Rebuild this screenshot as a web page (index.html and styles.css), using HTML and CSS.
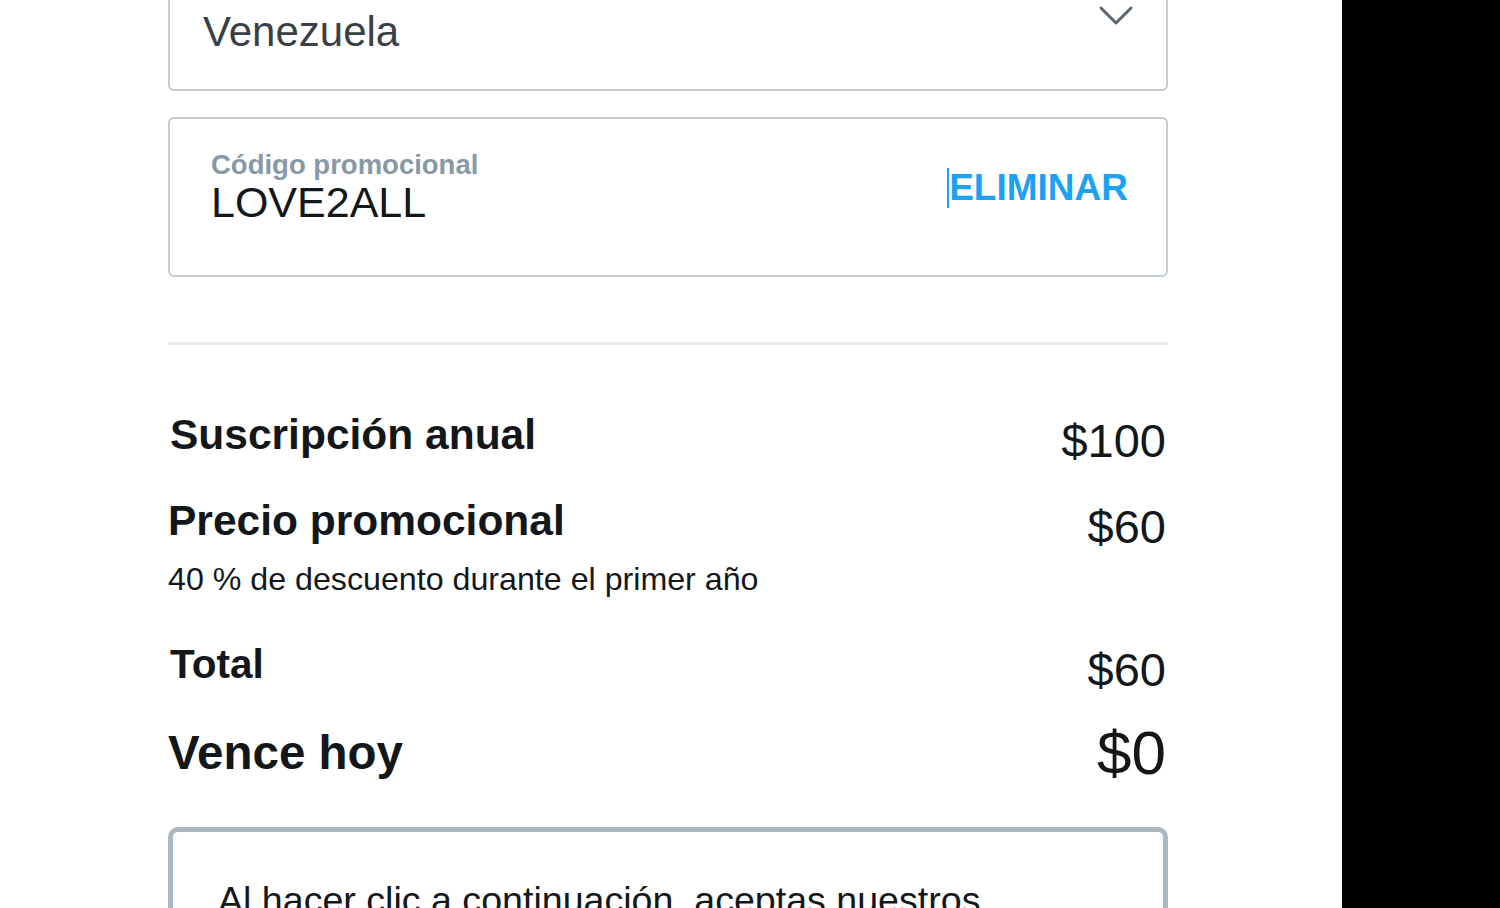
FILE: index.html
```html
<!DOCTYPE html>
<html lang="es">
<head>
    <meta charset="UTF-8">
    <meta name="viewport" content="width=device-width, initial-scale=1.0">
    <title>Suscripción</title>
    <link rel="stylesheet" href="styles.css">
</head>
<body>

<div class="page">
    <div class="checkout">

        <div class="select-box">
            <span class="select-value">Venezuela</span>
            <svg class="chevron" width="36" height="22" viewBox="0 0 36 22">
                <polyline points="3,3 18,18 33,3" fill="none" stroke="#5b6670" stroke-width="3" stroke-linecap="round" stroke-linejoin="round"/>
            </svg>
        </div>

        <div class="promo-box">
            <div class="promo-field">
                <span class="promo-label">Código promocional</span>
                <span class="promo-value">LOVE2ALL</span>
            </div>
            <span class="promo-remove">ELIMINAR</span>
        </div>

        <hr class="divider">

        <div class="row row-first">
            <span class="row-label">Suscripción anual</span>
            <span class="row-price">$100</span>
        </div>
        <div class="row">
            <div>
                <div class="row-label">Precio promocional</div>
                <div class="row-note">40 % de descuento durante el primer año</div>
            </div>
            <span class="row-price">$60</span>
        </div>
        <div class="row row-total">
            <span class="row-label label-small">Total</span>
            <span class="row-price">$60</span>
        </div>
        <div class="row row-due">
            <span class="due-label">Vence hoy</span>
            <span class="due-price">$0</span>
        </div>

        <div class="terms">
            Al hacer clic a continuación, aceptas nuestros Términos de servicio y la Política de privacidad.
        </div>

    </div>
    <div class="side"></div>
</div>

</body>
</html>
```

FILE: styles.css
```css
html, body {
    height: 100%;
    overflow: hidden;
}
body {
    font-family: "Liberation Sans", Arial, sans-serif;
    background-color: white;
    color: #14171a;
    margin: 0;
}
.page {
    display: flex;
    height: 100%;
}
.checkout {
    width: 1000px;
    padding-left: 168px;
    padding-right: 174px;
    margin-top: -30px;
}
.side {
    flex: 1;
    background-color: #000;
}

.select-box {
    display: flex;
    justify-content: space-between;
    align-items: flex-start;
    height: 121px;
    box-sizing: border-box;
    padding: 36px 32px 0 33px;
    border: 2px solid #c3ccd3;
    border-radius: 6px;
}
.select-value {
    font-size: 42px;
    line-height: 48px;
    color: #3a3f45;
}
.chevron {
    margin-top: -3px;
}

.promo-box {
    display: flex;
    justify-content: space-between;
    align-items: flex-start;
    margin-top: 26px;
    height: 160px;
    box-sizing: border-box;
    padding: 31px 38px 0 41px;
    border: 2px solid #c3ccd3;
    border-radius: 6px;
}
.promo-field {
    display: flex;
    flex-direction: column;
}
.promo-label {
    font-size: 27.5px;
    font-weight: bold;
    line-height: 30px;
    color: #8899a6;
}
.promo-value {
    font-size: 43px;
    line-height: 44px;
    color: #14171a;
}
.promo-remove {
    margin-top: 18px;
    font-size: 37px;
    font-weight: bold;
    line-height: 40px;
    color: #1da1f2;
    border-left: 2px solid #1da1f2;
}

.divider {
    border: none;
    height: 3px;
    background-color: #e6ecf0;
    margin: 65px 0 0 0;
}

.row {
    display: flex;
    justify-content: space-between;
    align-items: flex-start;
    margin-top: 26px;
    padding-right: 2px;
}
.row-first {
    margin-top: 66px;
    padding-left: 2px;
}
.row-total {
    margin-top: 41px;
    padding-left: 2px;
}
.row-due {
    margin-top: 25px;
}
.row-label {
    font-size: 42.5px;
    font-weight: bold;
    line-height: 48px;
}
.label-small {
    font-size: 40.5px;
}
.row-price {
    font-size: 47px;
    line-height: 60px;
}
.row-note {
    font-size: 32.2px;
    line-height: 40px;
    margin-top: 14px;
}
.due-label {
    font-size: 47.5px;
    font-weight: bold;
    line-height: 56px;
}
.due-price {
    font-size: 62px;
    line-height: 56px;
}

.terms {
    margin-top: 46px;
    padding: 44px 45px 40px 45px;
    border: 5px solid #aab8c2;
    border-radius: 10px;
    font-size: 37.6px;
    line-height: 48px;
    color: #14171a;
}
```
